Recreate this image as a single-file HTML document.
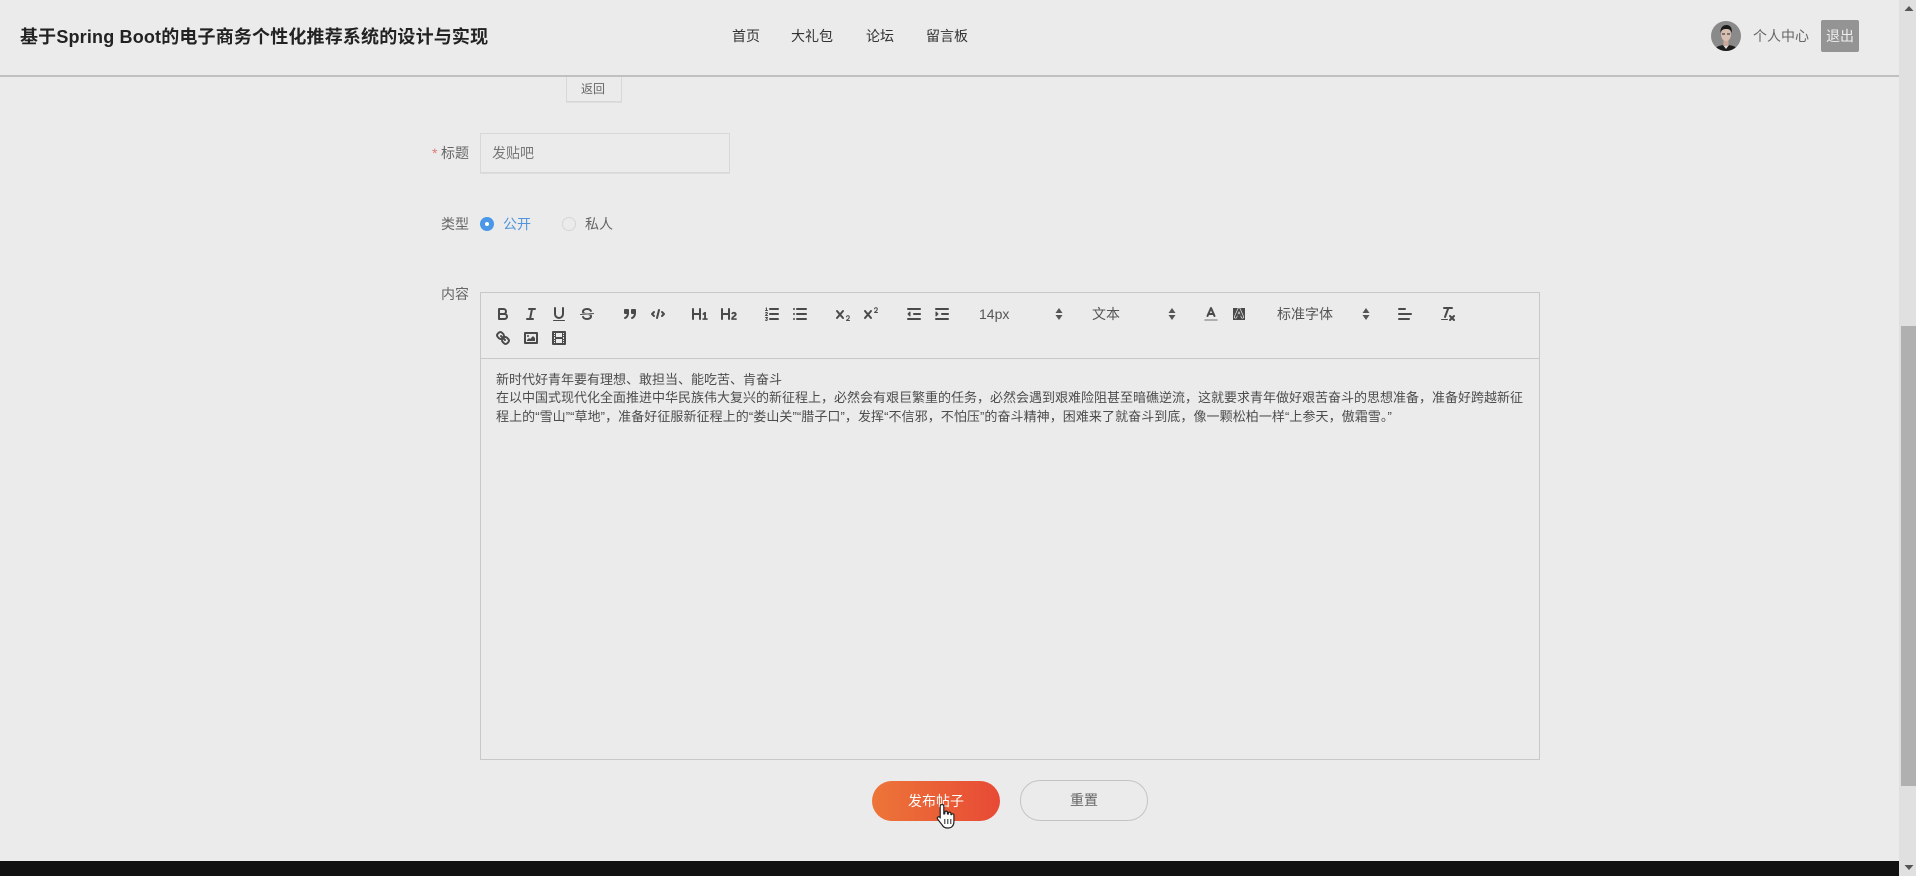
<!DOCTYPE html>
<html lang="zh-CN">
<head>
<meta charset="utf-8">
<title>发布帖子</title>
<style>
html,body{margin:0;padding:0;width:1916px;height:876px;overflow:hidden;background:#ebebeb;}
body{position:relative;font-family:"Liberation Sans","Noto Sans CJK SC",sans-serif;font-size:14px;color:#666;}
#w{position:absolute;left:0;top:0;width:1916px;height:876px;overflow:hidden;filter:blur(.35px);}
.a{position:absolute;white-space:nowrap;}
.t{position:absolute;white-space:nowrap;line-height:20px;height:20px;}
svg{position:absolute;overflow:visible;}
svg.i{width:18px;height:18px;fill:none;stroke:#4a4a4a;stroke-width:2;stroke-linecap:round;stroke-linejoin:round;}
svg.i .f{fill:#4a4a4a;stroke:none;}
svg.i .n{stroke-width:1;}
</style>
</head>
<body>
<div id="w">
<!-- header -->
<div class="a" style="left:0;top:75px;width:1899px;height:2px;background:#c0c0c0;"></div>
<div class="t" style="left:20px;top:27px;font-size:18px;font-weight:700;color:#222;letter-spacing:.17px;">基于Spring Boot的电子商务个性化推荐系统的设计与实现</div>
<div class="t" style="left:732px;top:26px;color:#333;">首页</div>
<div class="t" style="left:791px;top:26px;color:#333;">大礼包</div>
<div class="t" style="left:866px;top:26px;color:#333;">论坛</div>
<div class="t" style="left:926px;top:26px;color:#333;">留言板</div>

<svg style="left:1711px;top:21px;width:30px;height:30px;" viewBox="0 0 30 30">
  <defs><clipPath id="av"><circle cx="15" cy="15" r="15"/></clipPath></defs>
  <g clip-path="url(#av)">
    <rect width="30" height="30" fill="#8a8a8a"/>
    <path d="M3 30c1-5 7-6 12-6s11 1 12 6z" fill="#1c1c1c"/>
    <path d="M12 24l3 4 3-4z" fill="#ddd"/>
    <rect x="12.500" y="18" width="5" height="7" fill="#c9a999"/>
    <ellipse cx="15" cy="13.500" rx="5" ry="6.500" fill="#d8bfb2"/>
    <path d="M9.500 12c-.5-6 3-8 6-8s6 2 5.300 8c-1-3-2-4-5.500-4s-5 1-5.800 4z" fill="#1a1a1a"/>
    <path d="M11 13h3M16 13h3" stroke="#222" stroke-width="1"/>
  </g>
</svg>
<div class="t" style="left:1753px;top:26px;color:#666;">个人中心</div>
<div class="t" style="left:1821px;top:20px;width:38px;height:32px;line-height:32px;background:#949494;border-radius:2px;color:#eee;text-align:center;">退出</div>

<!-- form -->
<div class="a" style="left:566px;top:77px;width:54px;height:24px;border:1px solid #d8d8d8;border-top:0;box-shadow:0 1px 0 #ddd;"></div>
<div class="t" style="left:581px;top:79px;font-size:12px;color:#666;">返回</div>

<div class="t" style="left:432px;top:143px;color:#e07a7a;">*</div>
<div class="t" style="left:441px;top:143px;color:#666;">标题</div>
<div class="a" style="left:480px;top:133px;width:248px;height:38px;border:1px solid #d8d8d8;box-shadow:0 1px 0 #ddd;"></div>
<div class="t" style="left:492px;top:143px;color:#777;">发贴吧</div>

<div class="t" style="left:441px;top:214px;color:#666;">类型</div>
<div class="a" style="left:480px;top:217px;width:14px;height:14px;border-radius:50%;background:#4a97e8;"></div>
<div class="a" style="left:485px;top:222px;width:4px;height:4px;border-radius:50%;background:#fff;"></div>
<div class="t" style="left:503px;top:214px;color:#4f94dc;">公开</div>
<div class="a" style="left:562px;top:217px;width:12px;height:12px;border-radius:50%;border:1px solid #d5d5d5;"></div>
<div class="t" style="left:585px;top:214px;color:#666;">私人</div>

<div class="t" style="left:441px;top:284px;color:#666;">内容</div>

<!-- editor -->
<div class="a" style="left:480px;top:292px;width:1058px;height:466px;border:1px solid #c8c8c8;"></div>
<div class="a" style="left:481px;top:358px;width:1058px;height:1px;background:#c8c8c8;"></div>

<!-- toolbar icons -->
<svg class="i" style="left:494px;top:305px;" viewBox="0 0 18 18"><path d="M5,4H9.500A2.500,2.500,0,0,1,12,6.500v0A2.500,2.500,0,0,1,9.500,9H5A0,0,0,0,1,5,9V4A0,0,0,0,1,5,4Z"/><path d="M5,9h5.500A2.500,2.500,0,0,1,13,11.500v0A2.500,2.500,0,0,1,10.500,14H5a0,0,0,0,1,0,0V9A0,0,0,0,1,5,9Z"/></svg>
<svg class="i" style="left:522px;top:305px;" viewBox="0 0 18 18"><line x1="7" x2="13" y1="4" y2="4"/><line x1="5" x2="11" y1="14" y2="14"/><line x1="8" x2="10" y1="14" y2="4"/></svg>
<svg class="i" style="left:550px;top:305px;" viewBox="0 0 18 18"><path d="M5,3V9a4.012,4.012,0,0,0,4,4H9a4.012,4.012,0,0,0,4-4V3"/><rect class="f" height="1" rx=".5" ry=".5" width="12" x="3" y="15"/></svg>
<svg class="i" style="left:578px;top:305px;" viewBox="0 0 18 18"><line class="n" x1="15.500" x2="2.500" y1="8.500" y2="9.500"/><path class="f" d="M9.007,8C6.542,7.791,6,7.519,6,6.500,6,5.792,7.283,5,9,5c1.571,0,2.765.679,2.969,1.309a1,1,0,0,0,1.900-.617C13.356,4.106,11.354,3,9,3,6.200,3,4,4.538,4,6.500a3.200,3.200,0,0,0,.5,1.843Z"/><path class="f" d="M8.984,10C11.457,10.208,12,10.479,12,11.500c0,.708-1.283,1.500-3,1.500-1.571,0-2.765-.679-2.969-1.309a1,1,0,1,0-1.900.617C4.644,13.894,6.646,15,9,15c2.800,0,5-1.538,5-3.500a3.200,3.200,0,0,0-.5-1.843Z"/></svg>
<svg class="i" style="left:621px;top:305px;" viewBox="0 0 18 18"><rect x="4" y="5" width="3" height="3" fill="#4a4a4a"/><rect x="11" y="5" width="3" height="3" fill="#4a4a4a"/><path d="M7,8c0,4.031-3,5-3,5"/><path d="M14,8c0,4.031-3,5-3,5"/></svg>
<svg class="i" style="left:649px;top:305px;" viewBox="0 0 18 18"><polyline points="5 7 3 9 5 11"/><polyline points="13 7 15 9 13 11"/><line x1="10" x2="8" y1="5" y2="13"/></svg>
<svg class="i" style="left:691px;top:305px;" viewBox="0 0 18 18"><path class="f" d="M10,4V14a1,1,0,0,1-2,0V10H3v4a1,1,0,0,1-2,0V4A1,1,0,0,1,3,4V8H8V4a1,1,0,0,1,2,0Zm6.068,9.209H14.990V7.599a.541.541,0,0,0-.605-.605h-.627a1.011,1.011,0,0,0-.748.297L11.645,8.566a.543.543,0,0,0-.022.858l.286.308a.539.539,0,0,0,.847.033l.099-.088a1.214,1.214,0,0,0,.242-.353h.022s-.011.309-.011.605V13.209H12.041a.541.541,0,0,0-.605.605v.439a.541.541,0,0,0,.605.605h4.027a.541.541,0,0,0,.605-.605v-.439A.541.541,0,0,0,16.068,13.209Z"/></svg>
<svg class="i" style="left:720px;top:305px;" viewBox="0 0 18 18"><path class="f" d="M16.740,13.814v.439a.541.541,0,0,1-.605.605H11.855a.584.584,0,0,1-.649-.605V14.013c0-2.905,3.399-3.422,3.399-4.555a.777.777,0,0,0-.847-.781,1.177,1.177,0,0,0-.836.385c-.275.264-.561.374-.858.132l-.429-.341c-.308-.242-.385-.518-.154-.814a2.972,2.972,0,0,1,2.454-1.177,2.454,2.454,0,0,1,2.684,2.409c0,2.453-3.179,2.927-3.278,3.938h2.794A.541.541,0,0,1,16.740,13.814ZM9,3A1,1,0,0,0,8,4V8H3V4A1,1,0,0,0,1,4V14a1,1,0,0,0,2,0V10H8v4a1,1,0,0,0,2,0V4A1,1,0,0,0,9,3Z"/></svg>
<svg class="i" style="left:763px;top:305px;" viewBox="0 0 18 18"><line x1="7" x2="15" y1="4" y2="4"/><line x1="7" x2="15" y1="9" y2="9"/><line x1="7" x2="15" y1="14" y2="14"/><line class="n" x1="2.500" x2="4.500" y1="5.500" y2="5.500"/><path class="f" d="M3.500,2.500h.5v3h-1v-2h-.5v-.5z"/><path class="n" d="M4.500,10.500h-2c0-.8 2-1.500 2-2.500 0-.6-1.500-.8-2-.1"/><path class="n" d="M2.500,12.500h2l-1,1.200c1,0 1,2-.2,1.800-.5,0-.8-.2-.8-.5"/></svg>
<svg class="i" style="left:791px;top:305px;" viewBox="0 0 18 18"><line x1="6" x2="15" y1="4" y2="4"/><line x1="6" x2="15" y1="9" y2="9"/><line x1="6" x2="15" y1="14" y2="14"/><line x1="3" x2="3" y1="4" y2="4"/><line x1="3" x2="3" y1="9" y2="9"/><line x1="3" x2="3" y1="14" y2="14"/></svg>
<svg class="i" style="left:834px;top:305px;" viewBox="0 0 18 18"><path class="f" d="M15.500,15H13.861a3.858,3.858,0,0,0,1.914-2.975,1.800,1.800,0,0,0-1.600-1.751A1.921,1.921,0,0,0,12.021,11.700a.5,.5,0,1,0,.957.291h0a.914,.914,0,0,1,1.053-.725,.81,.81,0,0,1,.744.762c0,1.076-1.170,1.870-1.940,2.431A1.456,1.456,0,0,0,12,15.500a.5,.5,0,0,0,.5.5h3A.5,.5,0,0,0,15.500,15Z"/><path class="f" d="M9.650,5.241a1,1,0,0,0-1.409.108L6,7.964,3.759,5.349A1,1,0,0,0,2.240,6.651L4.680,9.500,2.240,12.350a1,1,0,0,0,1.519,1.300L6,11.036l2.241,2.614a1,1,0,0,0,1.519-1.300L7.320,9.500l2.440-2.850A1,1,0,0,0,9.650,5.241Z"/></svg>
<svg class="i" style="left:862px;top:305px;" viewBox="0 0 18 18"><path class="f" d="M15.500,7H13.861a4.015,4.015,0,0,0,1.914-2.975,1.800,1.800,0,0,0-1.600-1.751A1.922,1.922,0,0,0,12.021,3.700a.5,.5,0,1,0,.957.291,.917,.917,0,0,1,1.053-.725,.81,.81,0,0,1,.744.762c0,1.077-1.164,1.925-1.934,2.486A1.423,1.423,0,0,0,12,7.500a.5,.5,0,0,0,.5.5h3A.5,.5,0,0,0,15.500,7Z"/><path class="f" d="M9.651,5.241a1,1,0,0,0-1.410.108L6,7.964,3.759,5.349a1,1,0,1,0-1.519,1.300L4.679,9.500,2.240,12.350a1,1,0,1,0,1.519,1.300L6,11.036l2.241,2.614a1,1,0,0,0,1.519-1.300L7.321,9.500,9.760,6.651A1,1,0,0,0,9.651,5.241Z"/></svg>
<svg class="i" style="left:905px;top:305px;" viewBox="0 0 18 18"><line x1="3" x2="15" y1="14" y2="14"/><line x1="3" x2="15" y1="4" y2="4"/><line x1="9" x2="15" y1="9" y2="9"/><polyline points="5 7 5 11 3 9 5 7" fill="#4a4a4a" stroke-width="1"/></svg>
<svg class="i" style="left:933px;top:305px;" viewBox="0 0 18 18"><line x1="3" x2="15" y1="14" y2="14"/><line x1="3" x2="15" y1="4" y2="4"/><line x1="9" x2="15" y1="9" y2="9"/><polyline points="3 7 3 11 5 9 3 7" fill="#4a4a4a" stroke-width="1"/></svg>

<div class="t" style="left:979px;top:304px;color:#555;">14px</div>
<svg style="left:1054px;top:308px;width:10px;height:12px;" viewBox="0 0 10 12"><path d="M5 0L8.500 5H1.500zM5 12L8.500 7H1.500z" fill="#555"/></svg>
<div class="t" style="left:1092px;top:304px;color:#555;">文本</div>
<svg style="left:1167px;top:308px;width:10px;height:12px;" viewBox="0 0 10 12"><path d="M5 0L8.500 5H1.500zM5 12L8.500 7H1.500z" fill="#555"/></svg>

<svg class="i" style="left:1202px;top:305px;" viewBox="0 0 18 18"><line x1="3" x2="15" y1="15" y2="15" stroke="#999" stroke-width="1.500"/><polyline points="5.500 11 9 3 12.500 11"/><line x1="11.630" x2="6.380" y1="9" y2="9"/></svg>
<svg class="i" style="left:1230px;top:305px;" viewBox="0 0 18 18"><defs><pattern id="dots" width="2" height="2" patternUnits="userSpaceOnUse"><rect width="1" height="1" fill="#888"/><rect x="1" y="1" width="1" height="1" fill="#888"/></pattern></defs><rect x="3" y="3" width="12" height="12" fill="url(#dots)" stroke="none"/><polyline points="5.500 12 9 4 12.500 12" stroke-width="3" stroke="#ebebeb"/><polyline points="5.500 12 9 4 12.500 12" stroke-width="1.600"/><line x1="11.400" x2="6.600" y1="10" y2="10" stroke-width="1.600"/></svg>

<div class="t" style="left:1277px;top:304px;color:#555;">标准字体</div>
<svg style="left:1361px;top:308px;width:10px;height:12px;" viewBox="0 0 10 12"><path d="M5 0L8.500 5H1.500zM5 12L8.500 7H1.500z" fill="#555"/></svg>

<svg class="i" style="left:1396px;top:305px;" viewBox="0 0 18 18"><line x1="3" x2="15" y1="9" y2="9"/><line x1="3" x2="13" y1="14" y2="14"/><line x1="3" x2="9" y1="4" y2="4"/></svg>
<svg class="i" style="left:1439px;top:305px;" viewBox="0 0 18 18"><line x1="5" x2="13" y1="3" y2="3"/><line x1="6" x2="9.350" y1="12" y2="3"/><line x1="11" x2="15" y1="11" y2="15"/><line x1="15" x2="11" y1="11" y2="15"/><rect class="f" height="1" rx=".5" ry=".5" width="7" x="2" y="14"/></svg>

<svg class="i" style="left:494px;top:329px;" viewBox="0 0 18 18"><line x1="7" x2="11" y1="7" y2="11"/><path d="M8.900,4.577a3.476,3.476,0,0,1,.36,4.679A3.476,3.476,0,0,1,4.577,8.900C3.185,7.500,2.035,6.400,4.217,4.217S7.500,3.185,8.900,4.577Z"/><path d="M13.423,9.100a3.476,3.476,0,0,0-4.679-.36,3.476,3.476,0,0,0,.36,4.679c1.392,1.392,2.500,2.542,4.679.36S14.815,10.500,13.423,9.100Z"/></svg>
<svg class="i" style="left:522px;top:329px;" viewBox="0 0 18 18"><rect height="10" width="12" x="3" y="4"/><circle class="f" cx="6" cy="7" r="1"/><polyline class="f" points="5 12 5 11 7 9 8 10 11 7 13 9 13 12 5 12"/></svg>
<svg class="i" style="left:550px;top:329px;" viewBox="0 0 18 18"><rect height="12" width="12" x="3" y="3"/><rect class="f" height="12" width="1" x="5" y="3"/><rect class="f" height="12" width="1" x="12" y="3"/><rect class="f" height="2" width="8" x="5" y="8"/><rect class="f" height="1" width="3" x="3" y="5"/><rect class="f" height="1" width="3" x="3" y="7"/><rect class="f" height="1" width="3" x="3" y="10"/><rect class="f" height="1" width="3" x="3" y="12"/><rect class="f" height="1" width="3" x="12" y="5"/><rect class="f" height="1" width="3" x="12" y="7"/><rect class="f" height="1" width="3" x="12" y="10"/><rect class="f" height="1" width="3" x="12" y="12"/></svg>

<!-- editor text -->
<div class="a" style="left:496px;top:370.500px;font-size:13px;line-height:18.500px;color:#4c4c4c;">
新时代好青年要有理想、敢担当、能吃苦、肯奋斗<br>
在以中国式现代化全面推进中华民族伟大复兴的新征程上，必然会有艰巨繁重的任务，必然会遇到艰难险阻甚至暗礁逆流，这就要求青年做好艰苦奋斗的思想准备，准备好跨越新征<br>
<span style="letter-spacing:.07px;">程上的“雪山”“草地”，准备好征服新征程上的“娄山关”“腊子口”，发挥“不信邪，不怕压”的奋斗精神，困难来了就奋斗到底，像一颗松柏一样“上参天，傲霜雪。”</span>
</div>

<!-- buttons -->
<div class="a" style="left:872px;top:781px;width:128px;height:40px;line-height:40px;border-radius:20px;background:linear-gradient(90deg,#ec7538,#e84a35);color:#fff;text-align:center;">发布帖子</div>
<div class="a" style="left:1020px;top:780px;width:126px;height:39px;line-height:39px;border-radius:20px;border:1px solid #c4c4c4;color:#666;text-align:center;">重置</div>

<!-- hand cursor -->
<svg style="left:936px;top:803px;width:20px;height:27px;" viewBox="0 0 20 27">
  <path d="M6 1.500c1 0 1.800.7 1.800 1.800V11l1-.2V9.500c0-1.800 2.500-1.800 2.700 0v1.500l.8.100v-.8c0-1.600 2.400-1.600 2.600 0v1.300l.6.100c.2-1.300 2.300-1.200 2.400.4v6.600c0 3.500-2 6.300-5.500 6.300H11c-2.500 0-4-1.300-5-3.300L1.500 16c-.9-1.500 1-3 2.300-1.800L4.200 15V3.300C4.200 2.200 5 1.500 6 1.500z" fill="#fff" stroke="#222" stroke-width="1.200" stroke-linejoin="round"/>
  <path d="M8.800 16v5M11.800 16v5M14.800 16v5" stroke="#222" stroke-width="1"/>
</svg>

<!-- footer -->
<div class="a" style="left:0;top:861px;width:1899px;height:15px;background:#111;"></div>

<!-- scrollbar -->
<div class="a" style="left:1899px;top:0;width:17px;height:876px;background:#e0e0e0;"></div>
<div class="a" style="left:1901px;top:326px;width:15px;height:460px;background:#b0b0b0;"></div>
<svg style="left:1904px;top:5px;width:10px;height:7px;" viewBox="0 0 10 7"><path d="M5 1L9.500 6H.5z" fill="#555"/></svg>
<svg style="left:1904px;top:864px;width:10px;height:7px;" viewBox="0 0 10 7"><path d="M5 6L9.500 1H.5z" fill="#555"/></svg>
</div>
</body>
</html>
